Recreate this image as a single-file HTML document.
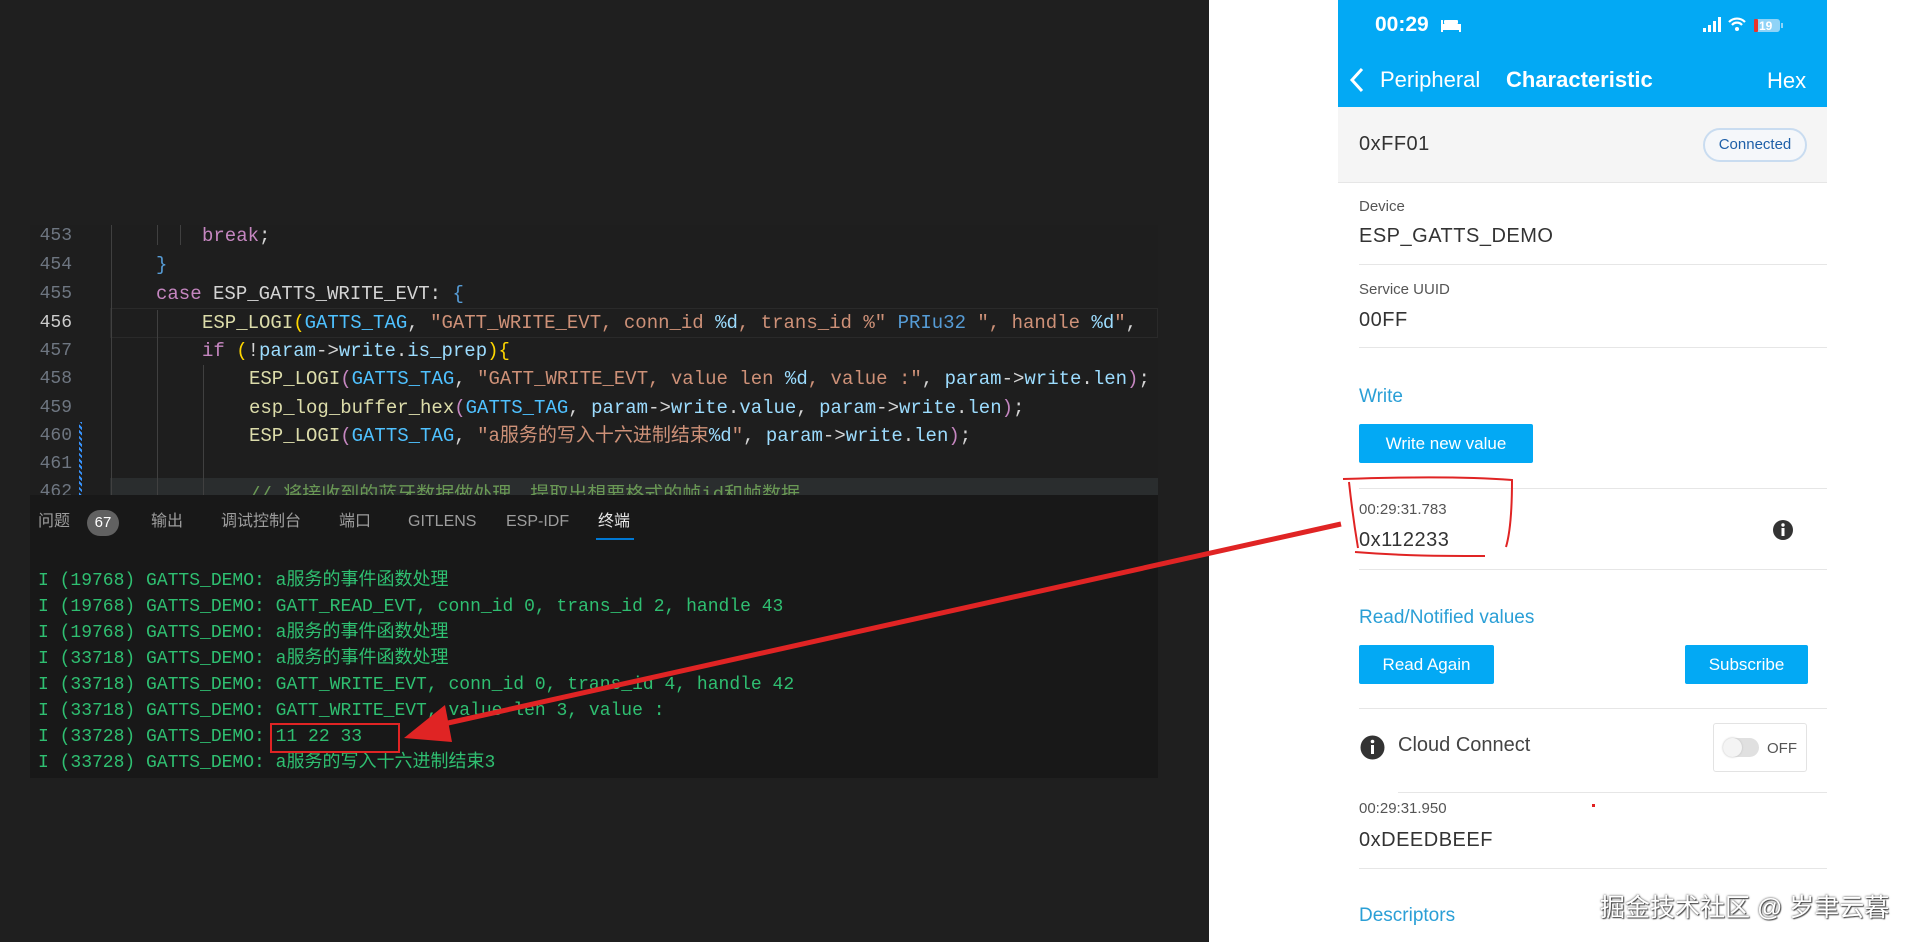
<!DOCTYPE html>
<html><head><meta charset="utf-8"><style>
*{margin:0;padding:0;box-sizing:border-box}
body{width:1911px;height:942px;overflow:hidden;background:#fff;position:relative;font-family:"Liberation Sans","Noto Sans CJK SC",sans-serif}
.abs{position:absolute;white-space:pre}
#dark{position:absolute;left:0;top:0;width:1209px;height:942px;background:#1f1f1f}
.code{font-family:"Liberation Mono","Noto Sans CJK SC",monospace;font-size:19px;color:#d4d4d4;line-height:26px;height:26px}
.ln{position:absolute;left:36px;width:36px;text-align:right;color:#6e7681;font-family:"Liberation Mono",monospace;font-size:18px;line-height:26px}
.k{color:#c586c0}.f{color:#dcdcaa}.t{color:#4fc1ff}.s{color:#ce9178}.p{color:#9cdcfe}.y{color:#ffd700}.b{color:#569cd6}.c{color:#6a9955}
#term{position:absolute;left:30px;top:495px;width:1128px;height:283px;background:#181818}
.tab{position:absolute;top:510px;font-size:16px;color:#9d9d9d;line-height:24px;height:24px}
.tl{position:absolute;left:38px;font-family:"Liberation Mono","Noto Sans CJK SC",monospace;font-size:18px;color:#2fbf71;white-space:pre;line-height:24px;height:24px}
#phone{position:absolute;left:1338px;top:0;width:489px;height:942px;background:#fff}
.hr{position:absolute;left:21px;right:0;height:1px;background:#e6e6e6}
.lbl{position:absolute;left:21px;font-size:15px;color:#555}
.val{position:absolute;left:21px;font-size:20px;color:#333;letter-spacing:.5px}
.sec{position:absolute;left:21px;font-size:19px;color:#2a9fd6}
.btn{position:absolute;background:#03a9f4;color:#fff;font-size:17px;text-align:center;border-radius:2px}
</style></head><body>
<div id="dark">
 <div style="position:absolute;left:30px;top:225px;width:1128px;height:270px;background:#1e1e1e"></div>
 <div style="position:absolute;left:110px;top:308px;width:1048px;height:30px;border:1px solid #2a2a2a"></div>
 <div style="position:absolute;left:110px;top:478px;width:1048px;height:20px;background:#2a2d2e"></div>
 <div style="position:absolute;left:79px;top:422px;width:3px;height:73px;background:repeating-linear-gradient(45deg,#3794ff 0 2px,#1e1e1e 2px 4px)"></div>
 <div style="position:absolute;left:111px;top:225px;width:1px;height:270px;background:#404040"></div>
 <div style="position:absolute;left:157px;top:225px;width:1px;height:20px;background:#404040"></div>
 <div style="position:absolute;left:180px;top:225px;width:1px;height:20px;background:#404040"></div>
 <div style="position:absolute;left:157px;top:310px;width:1px;height:185px;background:#404040"></div>
 <div style="position:absolute;left:203px;top:365px;width:1px;height:130px;background:#404040"></div>
 <div class="ln" style="top:223px">453</div><div class="ln" style="top:252px">454</div><div class="ln" style="top:281px">455</div><div class="ln" style="top:310px;color:#ccc">456</div><div class="ln" style="top:338px">457</div><div class="ln" style="top:366px">458</div><div class="ln" style="top:395px">459</div><div class="ln" style="top:423px">460</div><div class="ln" style="top:451px">461</div><div class="ln" style="top:479px">462</div>
 <div class="abs code" style="left:202px;top:223px"><span class="k">break</span>;</div>
 <div class="abs code" style="left:156px;top:252px"><span class="b">}</span></div>
 <div class="abs code" style="left:156px;top:281px"><span class="k">case</span> ESP_GATTS_WRITE_EVT: <span class="b">{</span></div>
 <div class="abs code" style="left:202px;top:310px"><span class="f">ESP_LOGI</span><span class="y">(</span><span class="t">GATTS_TAG</span>, <span class="s">"GATT_WRITE_EVT, conn_id </span><span class="p">%d</span><span class="s">, trans_id %"</span> <span class="b">PRIu32</span> <span class="s">", handle </span><span class="p">%d</span><span class="s">"</span>,</div>
 <div class="abs code" style="left:202px;top:338px"><span class="k">if</span> <span class="y">(</span>!<span class="p">param</span>-&gt;<span class="p">write</span>.<span class="p">is_prep</span><span class="y">){</span></div>
 <div class="abs code" style="left:249px;top:366px"><span class="f">ESP_LOGI</span><span class="k">(</span><span class="t">GATTS_TAG</span>, <span class="s">"GATT_WRITE_EVT, value len </span><span class="p">%d</span><span class="s">, value :"</span>, <span class="p">param</span>-&gt;<span class="p">write</span>.<span class="p">len</span><span class="k">)</span>;</div>
 <div class="abs code" style="left:249px;top:395px"><span class="f">esp_log_buffer_hex</span><span class="k">(</span><span class="t">GATTS_TAG</span>, <span class="p">param</span>-&gt;<span class="p">write</span>.<span class="p">value</span>, <span class="p">param</span>-&gt;<span class="p">write</span>.<span class="p">len</span><span class="k">)</span>;</div>
 <div class="abs code" style="left:249px;top:423px"><span class="f">ESP_LOGI</span><span class="k">(</span><span class="t">GATTS_TAG</span>, <span class="s">"a服务的写入十六进制结束</span><span class="p">%d</span><span class="s">"</span>, <span class="p">param</span>-&gt;<span class="p">write</span>.<span class="p">len</span><span class="k">)</span>;</div>
 <div class="abs code c" style="left:249px;top:482px;height:13px;overflow:hidden">// 将接收到的蓝牙数据做处理，提取出想要格式的帧id和帧数据</div>
 <div id="term"></div>
 <div class="tab" style="left:38px">问题</div>
 <div style="position:absolute;left:87px;top:510px;width:32px;height:26px;border-radius:13px;background:#616161;color:#fff;font-size:15px;text-align:center;line-height:26px">67</div>
 <div class="tab" style="left:151px">输出</div><div class="tab" style="left:221px">调试控制台</div><div class="tab" style="left:339px">端口</div><div class="tab" style="left:408px">GITLENS</div><div class="tab" style="left:506px">ESP-IDF</div><div class="tab" style="left:598px;color:#e7e7e7">终端</div>
 <div style="position:absolute;left:596px;top:538px;width:38px;height:2px;background:#0078d4"></div>
 <div class="tl" style="top:569px">I (19768) GATTS_DEMO: a服务的事件函数处理</div>
 <div class="tl" style="top:595px">I (19768) GATTS_DEMO: GATT_READ_EVT, conn_id 0, trans_id 2, handle 43</div>
 <div class="tl" style="top:621px">I (19768) GATTS_DEMO: a服务的事件函数处理</div>
 <div class="tl" style="top:647px">I (33718) GATTS_DEMO: a服务的事件函数处理</div>
 <div class="tl" style="top:673px">I (33718) GATTS_DEMO: GATT_WRITE_EVT, conn_id 0, trans_id 4, handle 42</div>
 <div class="tl" style="top:699px">I (33718) GATTS_DEMO: GATT_WRITE_EVT, value len 3, value :</div>
 <div class="tl" style="top:725px">I (33728) GATTS_DEMO: 11 22 33</div>
 <div class="tl" style="top:751px">I (33728) GATTS_DEMO: a服务的写入十六进制结束3</div>
</div>
<div id="phone">
 <div style="position:absolute;left:0;top:0;width:489px;height:107px;background:#03a9f4"></div>
 <div class="abs" style="left:37px;top:13px;color:#fff;font-size:21px;font-weight:bold">00:29</div>
 <svg style="position:absolute;left:102px;top:17px" width="22" height="16" viewBox="0 0 22 16"><rect x="1" y="7" width="20" height="6" fill="#fff"/><rect x="1" y="3" width="2" height="12" fill="#fff"/><rect x="19" y="9" width="2" height="6" fill="#fff"/><rect x="4" y="3" width="14" height="4" rx="1" fill="#fff"/></svg>
 <svg style="position:absolute;left:365px;top:16px" width="90" height="18" viewBox="0 0 90 18"><rect x="0" y="12" width="3" height="4" fill="#fff"/><rect x="5" y="9" width="3" height="7" fill="#fff"/><rect x="10" y="5" width="3" height="11" fill="#fff"/><rect x="15" y="1" width="3" height="15" fill="#fff"/><path d="M26 6a11 11 0 0 1 16 0M29 9a6.5 6.5 0 0 1 10 0" stroke="#fff" stroke-width="2.2" fill="none"/><circle cx="34" cy="13" r="2" fill="#fff"/><rect x="51" y="3" width="26" height="13" rx="3" fill="#8fd3f7"/><rect x="51" y="3" width="4" height="13" rx="1" fill="#e8332b"/><text x="56" y="14" font-size="12" font-weight="bold" fill="#fff" font-family="Liberation Sans">19</text><rect x="78" y="7" width="2" height="5" fill="#8fd3f7"/></svg>
 <svg style="position:absolute;left:10px;top:66px" width="18" height="28" viewBox="0 0 18 28"><path d="M14 3L4 14l10 11" stroke="#fff" stroke-width="3" fill="none"/></svg>
 <div class="abs" style="left:42px;top:67px;color:#fff;font-size:22px">Peripheral</div>
 <div class="abs" style="left:168px;top:67px;color:#fff;font-size:22px;font-weight:bold">Characteristic</div>
 <div class="abs" style="left:429px;top:68px;color:#fff;font-size:22px">Hex</div>
 <div style="position:absolute;left:0;top:107px;width:489px;height:76px;background:#f5f5f5;border-bottom:1px solid #e6e6e6"></div>
 <div class="val" style="top:133px">0xFF01</div>
 <div style="position:absolute;left:365px;top:128px;width:104px;height:34px;border:2px solid #c9dcf0;border-radius:17px;background:#f5f7fa;color:#1e5fa8;font-size:15px;text-align:center;line-height:30px">Connected</div>
 <div class="lbl" style="top:198px">Device</div><div class="val" style="top:225px">ESP_GATTS_DEMO</div><div class="hr" style="top:264px"></div>
 <div class="lbl" style="top:281px">Service UUID</div><div class="val" style="top:309px">00FF</div><div class="hr" style="top:347px"></div>
 <div class="sec" style="top:386px">Write</div>
 <div class="btn" style="left:21px;top:424px;width:174px;height:39px;line-height:39px">Write new value</div>
 <div class="hr" style="top:488px"></div>
 <div class="lbl" style="top:501px">00:29:31.783</div><div class="val" style="top:529px">0x112233</div>
 <svg style="position:absolute;left:434px;top:519px" width="22" height="22"><circle cx="11" cy="11" r="10" fill="#333"/><rect x="9.5" y="9" width="3" height="8" fill="#fff"/><circle cx="11" cy="6" r="1.7" fill="#fff"/></svg>
 <div class="hr" style="top:569px"></div>
 <div class="sec" style="top:607px">Read/Notified values</div>
 <div class="btn" style="left:21px;top:645px;width:135px;height:39px;line-height:39px">Read Again</div>
 <div class="btn" style="left:347px;top:645px;width:123px;height:39px;line-height:39px">Subscribe</div>
 <div class="hr" style="top:708px"></div>
 <svg style="position:absolute;left:22px;top:735px" width="25" height="25"><circle cx="12.5" cy="12.5" r="12" fill="#333"/><rect x="11" y="10" width="3" height="9" fill="#fff"/><circle cx="12.5" cy="6.5" r="1.8" fill="#fff"/></svg>
 <div class="abs" style="left:60px;top:734px;font-size:20px;color:#444">Cloud Connect</div>
 <div style="position:absolute;left:375px;top:723px;width:94px;height:49px;border:1px solid #e3e3e3;border-radius:3px"></div>
 <div style="position:absolute;left:385px;top:738px;width:36px;height:19px;border-radius:10px;background:#e0e0e0"></div>
 <div style="position:absolute;left:385px;top:738px;width:19px;height:19px;border-radius:10px;background:#f4f4f4;box-shadow:0 0 2px #bbb"></div>
 <div class="abs" style="left:429px;top:740px;font-size:15px;color:#555">OFF</div>
 <div class="hr" style="top:792px;left:60px"></div>
 <div class="lbl" style="top:800px">00:29:31.950</div><div class="val" style="top:829px">0xDEEDBEEF</div><div class="hr" style="top:868px"></div>
 <div class="sec" style="top:905px">Descriptors</div>
 <div style="position:absolute;left:254px;top:804px;width:3px;height:3px;background:#e02020"></div>
</div>
<div class="abs" style="left:1600px;top:888px;font-size:25px;color:#fff;text-shadow:0 0 2px #333,1px 1px 1px #555">掘金技术社区 @ 岁聿云暮</div>
<svg style="position:absolute;left:0;top:0" width="1911" height="942">
 <rect x="271" y="724" width="128" height="28" fill="none" stroke="#e02424" stroke-width="2"/>
 <path d="M1341 524L430 727" stroke="#e02424" stroke-width="5"/>
 <path d="M404 738L445 705L452 742Z" fill="#e02424"/>
 <path d="M1343 479C1400 477 1460 476 1512 480C1512 505 1511 530 1506 547M1349 482C1352 510 1355 530 1358 548M1355 552C1405 556 1440 556 1485 556" stroke="#e02424" stroke-width="2" fill="none"/>
</svg>
</body></html>
